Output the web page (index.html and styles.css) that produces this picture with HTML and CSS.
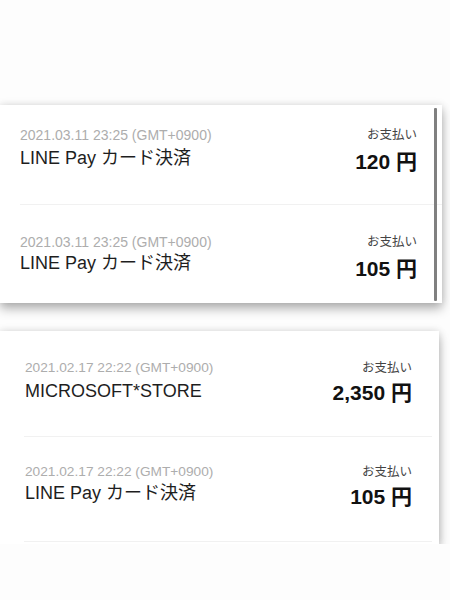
FILE: index.html
```html
<!DOCTYPE html>
<html lang="ja">
<head>
    <meta charset="UTF-8">
    <title>LINE Pay 履歴</title>
    <link rel="stylesheet" href="styles.css">
</head>
<body>
    <div class="page">
        <div class="card card-first">
            <div class="row row-top">
                <div class="info">
                    <div class="date">2021.03.11 23:25 (GMT+0900)</div>
                    <div class="title">LINE Pay カード決済</div>
                </div>
                <div class="pay">
                    <div class="label">お支払い</div>
                    <div class="amount">120 円</div>
                </div>
            </div>
            <div class="row row-last">
                <div class="info">
                    <div class="date">2021.03.11 23:25 (GMT+0900)</div>
                    <div class="title">LINE Pay カード決済</div>
                </div>
                <div class="pay">
                    <div class="label">お支払い</div>
                    <div class="amount">105 円</div>
                </div>
            </div>
            <div class="scrollbar"></div>
        </div>

        <div class="card card-second">
            <div class="row">
                <div class="info">
                    <div class="date">2021.02.17 22:22 (GMT+0900)</div>
                    <div class="title">MICROSOFT*STORE</div>
                </div>
                <div class="pay">
                    <div class="label">お支払い</div>
                    <div class="amount">2,350 円</div>
                </div>
            </div>
            <div class="row row-last">
                <div class="info">
                    <div class="date">2021.02.17 22:22 (GMT+0900)</div>
                    <div class="title">LINE Pay カード決済</div>
                </div>
                <div class="pay">
                    <div class="label">お支払い</div>
                    <div class="amount">105 円</div>
                </div>
            </div>
        </div>
    </div>
</body>
</html>
```

FILE: styles.css
```css
html {
    background: #fdfdfd;
}
body {
    margin: 0;
    font-family: "Liberation Sans", "Noto Sans CJK JP", sans-serif;
    color: #222;
}
.page {
    padding-top: 105px;
}
.card {
    position: relative;
    background: #fff;
    box-shadow: 0 6px 10px rgba(0, 0, 0, 0.28), 0 0 8px rgba(0, 0, 0, 0.12);
}
.card-first {
    width: 442px;
    height: 198px;
}
.card-second {
    width: 439px;
    height: 213px;
    margin-top: 28px;
}
.row {
    display: flex;
    justify-content: space-between;
    padding: 29px 0 30px;
    margin-left: 20px;
    padding-right: 25px;
    border-bottom: 1px solid #f1f1f1;
}
.card-second .row {
    margin-left: 24px;
    padding-left: 1px;
    margin-right: 7px;
    padding-right: 20px;
    padding-bottom: 31px;
}
.row-top {
    padding-top: 22px;
}
.row-last {
    padding-bottom: 28px;
}
.card-first .row-last {
    border-bottom: none;
}
.card-second .row-last {
    padding-top: 27px;
    padding-bottom: 32px;
}
.date {
    font-size: 14px;
    line-height: 16px;
    color: #adadad;
}
.card-second .date {
    font-size: 13.7px;
}
.title {
    font-size: 18px;
    line-height: 22px;
    margin-top: 4px;
    color: #1e1e1e;
}
.row-last .title {
    margin-top: 2px;
}
.pay {
    text-align: right;
}
.label {
    font-size: 12.5px;
    line-height: 16px;
    color: #444;
}
.amount {
    font-size: 21px;
    line-height: 24px;
    font-weight: bold;
    margin-top: 7px;
    color: #111;
}
.card-second .amount {
    margin-top: 5px;
}
.scrollbar {
    position: absolute;
    right: 5px;
    top: 3px;
    bottom: 2px;
    width: 3px;
    background: #808080;
    border-radius: 1px;
}
```
